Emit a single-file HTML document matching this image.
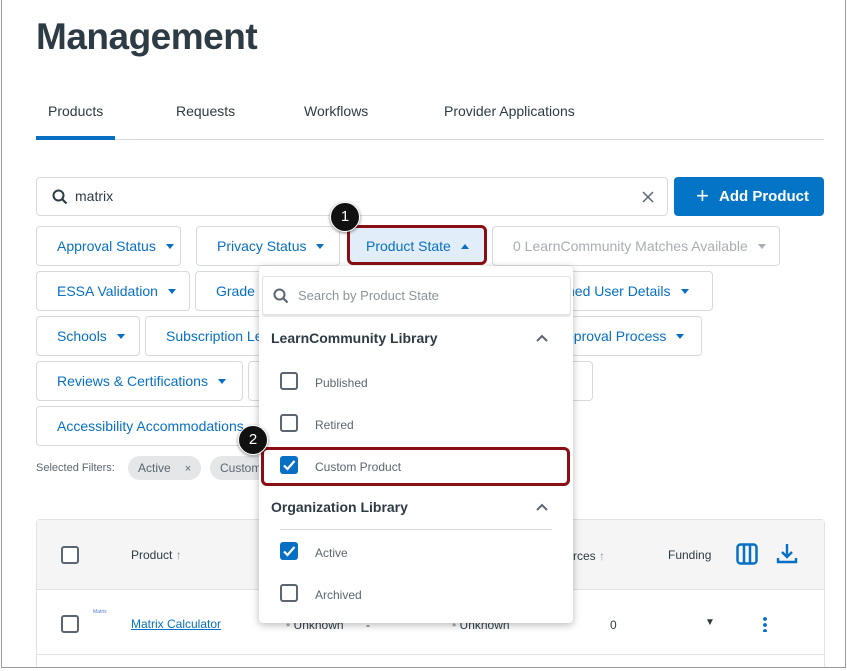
<!DOCTYPE html>
<html><head><meta charset="utf-8"><style>
*{box-sizing:border-box;margin:0;padding:0}
body{width:847px;height:671px;background:#fff;font-family:"Liberation Sans",sans-serif;position:relative;overflow:hidden;color:#2d3b45}
.a{position:absolute}
.frame{left:1px;top:-2px;width:845px;height:670px;border:1px solid #9a9a9a;border-top:none}
.btn{position:absolute;height:40px;border:1px solid #d7dadd;border-radius:4px;color:#0770c4;font-size:14px;line-height:38px;padding-left:20px;background:#fff;white-space:nowrap;overflow:hidden}
.car{display:inline-block;width:0;height:0;border-left:4px solid transparent;border-right:4px solid transparent;border-top:5px solid #0770c4;margin-left:10px;vertical-align:2px}
.cb{position:absolute;width:18px;height:18px;border:2px solid #5b6670;border-radius:3px;background:#fff}
.cbc{position:absolute;width:18px;height:18px;border-radius:3px;background:#0770c4}
.opt{position:absolute;font-size:12px;color:#5b6670}
.badge{position:absolute;width:30px;height:30px;border-radius:50%;background:#111;color:#fff;font-size:15px;text-align:center;line-height:28px;border:1.5px solid #fff;box-shadow:0 1px 3px rgba(0,0,0,.5)}
.chip{position:absolute;height:24px;border-radius:12px;background:#e4e6e8;font-size:12px;color:#5b6670;line-height:24px;padding-left:10px}
</style></head><body>
<div class="a" style="left:36px;top:16px;font-size:37px;font-weight:bold;color:#2d3b45;letter-spacing:-0.5px">Management</div>
<div class="a" style="left:48px;top:103px;font-size:14px">Products</div>
<div class="a" style="left:176px;top:103px;font-size:14px">Requests</div>
<div class="a" style="left:304px;top:103px;font-size:14px">Workflows</div>
<div class="a" style="left:444px;top:103px;font-size:14px">Provider Applications</div>
<div class="a" style="left:36px;top:139px;width:788px;height:1px;background:#d7dadd"></div>
<div class="a" style="left:36px;top:136px;width:79px;height:4px;background:#0770c4"></div>

<div class="a" style="left:36px;top:177px;width:632px;height:39px;border:1px solid #d7dadd;border-radius:4px"></div>
<svg class="a" style="left:51px;top:188px" width="18" height="18" viewBox="0 0 18 18"><circle cx="7.5" cy="7.5" r="5" fill="none" stroke="#2d3b45" stroke-width="2"/><path d="M11 11l4.5 4.5" stroke="#2d3b45" stroke-width="2.2"/></svg>
<div class="a" style="left:75px;top:188px;font-size:14px">matrix</div>
<svg class="a" style="left:642px;top:191px" width="12" height="12"><path d="M1 1l10 10M11 1L1 11" stroke="#5b6670" stroke-width="1.5"/></svg>
<div class="a" style="left:674px;top:177px;width:150px;height:39px;background:#0374c6;border-radius:4px;color:#fff;font-size:15px;font-weight:bold;line-height:39px;padding-left:45px">Add Product</div>
<div class="a" style="left:696px;top:186px;color:#fff;font-size:22px;line-height:20px">+</div>

<div class="btn" style="left:36px;top:226px;width:145px">Approval Status<span class="car"></span></div>
<div class="btn" style="left:196px;top:226px;width:144px">Privacy Status<span class="car"></span></div>
<div class="btn" style="left:347px;top:225px;width:140px;background:#e1edf8;border:3px solid #8a0f14;border-radius:6px;padding-left:16px;line-height:36px">Product State<span class="car" style="border-top:none;border-bottom:5px solid #0770c4"></span></div>
<div class="btn" style="left:492px;top:226px;width:288px;color:#a8aeb3">0 LearnCommunity Matches Available<span class="car" style="border-top-color:#a8aeb3"></span></div>

<div class="btn" style="left:36px;top:271px;width:154px">ESSA Validation<span class="car"></span></div>
<div class="btn" style="left:195px;top:271px;width:200px">Grade</div>
<div class="btn" style="left:540px;top:271px;width:173px;padding-left:26px">ned User Details<span class="car"></span></div>

<div class="btn" style="left:36px;top:316px;width:104px">Schools<span class="car"></span></div>
<div class="btn" style="left:145px;top:316px;width:200px">Subscription Le</div>
<div class="btn" style="left:540px;top:316px;width:162px;padding-left:25px">pproval Process<span class="car"></span></div>

<div class="btn" style="left:36px;top:361px;width:207px">Reviews &amp; Certifications<span class="car"></span></div>
<div class="btn" style="left:248px;top:361px;width:345px"></div>
<div class="btn" style="left:36px;top:406px;width:260px">Accessibility Accommodations</div>

<div class="a" style="left:36px;top:462px;font-size:11px;color:#5b6670">Selected Filters:</div>
<div class="chip" style="left:128px;top:456px;width:73px">Active<span style="margin-left:14px;font-size:11px">×</span></div>
<div class="chip" style="left:210px;top:456px;width:80px">Custom</div>

<div class="a" style="left:36px;top:519px;width:789px;height:148px;border:1px solid #e0e2e4;border-bottom:none;border-radius:4px 4px 0 0;background:#fff"></div>
<div class="a" style="left:37px;top:520px;width:787px;height:70px;background:#f5f5f5;border-bottom:1px solid #e0e2e4"></div>
<div class="a" style="left:37px;top:654px;width:787px;height:1px;background:#e0e2e4"></div>
<div class="cb" style="left:61px;top:546px"></div>
<div class="a" style="left:131px;top:548px;font-size:12px">Product <span style="color:#8b949b">↑</span></div>
<div class="a" style="left:573px;top:549px;font-size:12px">rces <span style="color:#8b949b">↑</span></div>
<div class="a" style="left:668px;top:548px;font-size:12px">Funding</div>
<svg class="a" style="left:736px;top:543px" width="22" height="22"><rect x="1.5" y="1.5" width="19" height="19" rx="3" fill="none" stroke="#0770c4" stroke-width="2.5"/><path d="M8 2v18M14 2v18" stroke="#0770c4" stroke-width="2.5"/></svg>
<svg class="a" style="left:776px;top:543px" width="22" height="22"><path d="M11 1v13M6 9l5 5 5-5" fill="none" stroke="#0770c4" stroke-width="2.4"/><path d="M2 15v4h18v-4" fill="none" stroke="#0770c4" stroke-width="2.4"/></svg>
<div class="cb" style="left:61px;top:615px"></div>
<div class="a" style="left:93px;top:609px;font-size:5px;color:#5a7fd0">Matrix</div>
<div class="a" style="left:131px;top:617px;font-size:12px;color:#0770c4;text-decoration:underline">Matrix Calculator</div>
<div class="a" style="left:286px;top:618px;font-size:12px;color:#2d3b45"><span style="color:#aaa">•</span> Unknown</div>
<div class="a" style="left:366px;top:618px;font-size:12px">-</div>
<div class="a" style="left:452px;top:618px;font-size:12px"><span style="color:#aaa">•</span> Unknown</div>
<div class="a" style="left:610px;top:618px;font-size:12px">0</div>
<div class="a" style="left:705px;top:617px;font-size:10px">▼</div>
<div class="a" style="left:763px;top:616px;width:4px;height:16px;background:radial-gradient(circle,#0770c4 1.8px,transparent 2px) 0 0/4px 6px"></div>
<div class="a frame" style="background:transparent"></div>
<div class="a" style="left:0;top:669px;width:847px;height:2px;background:#fff"></div>

<div class="a" style="left:259px;top:266px;width:314px;height:357px;background:#fff;border-radius:4px;box-shadow:0 2px 8px rgba(0,0,0,.28)"></div>
<div class="a" style="left:262px;top:276px;width:309px;height:39px;border:1px solid #e0e2e4;border-radius:3px;box-shadow:0 2px 0 #e6e6e6"></div>
<svg class="a" style="left:272px;top:287px" width="18" height="18" viewBox="0 0 18 18"><circle cx="7.5" cy="7.5" r="5" fill="none" stroke="#5b6670" stroke-width="2"/><path d="M11 11l4.5 4.5" stroke="#5b6670" stroke-width="2.2"/></svg>
<div class="a" style="left:298px;top:288px;font-size:13px;color:#8b949b">Search by Product State</div>
<div class="a" style="left:271px;top:330px;font-size:14px;font-weight:bold;color:#2d3b45">LearnCommunity Library</div>
<svg class="a" style="left:535px;top:333px" width="14" height="10"><path d="M2 8l5-5 5 5" fill="none" stroke="#5b6670" stroke-width="2"/></svg>
<div class="cb" style="left:280px;top:372px"></div><div class="opt" style="left:315px;top:376px">Published</div>
<div class="cb" style="left:280px;top:414px"></div><div class="opt" style="left:315px;top:418px">Retired</div>
<div class="a" style="left:261px;top:447px;width:309px;height:39px;border:3px solid #8a0f14;border-radius:6px"></div>
<div class="cbc" style="left:280px;top:456px"></div>
<svg class="a" style="left:280px;top:456px" width="18" height="18"><path d="M4 9.5l3.5 3.5 7-8" fill="none" stroke="#fff" stroke-width="2.2"/></svg>
<div class="opt" style="left:315px;top:460px">Custom Product</div>
<div class="a" style="left:271px;top:499px;font-size:14px;font-weight:bold;color:#2d3b45">Organization Library</div>
<svg class="a" style="left:535px;top:502px" width="14" height="10"><path d="M2 8l5-5 5 5" fill="none" stroke="#5b6670" stroke-width="2"/></svg>
<div class="a" style="left:280px;top:529px;width:272px;height:1px;background:#d7dadd"></div>
<div class="cbc" style="left:280px;top:542px"></div>
<svg class="a" style="left:280px;top:542px" width="18" height="18"><path d="M4 9.5l3.5 3.5 7-8" fill="none" stroke="#fff" stroke-width="2.2"/></svg>
<div class="opt" style="left:315px;top:546px">Active</div>
<div class="cb" style="left:280px;top:584px"></div><div class="opt" style="left:315px;top:588px">Archived</div>

<div class="badge" style="left:330px;top:202px">1</div>
<div class="badge" style="left:238px;top:425px">2</div>
</body></html>
